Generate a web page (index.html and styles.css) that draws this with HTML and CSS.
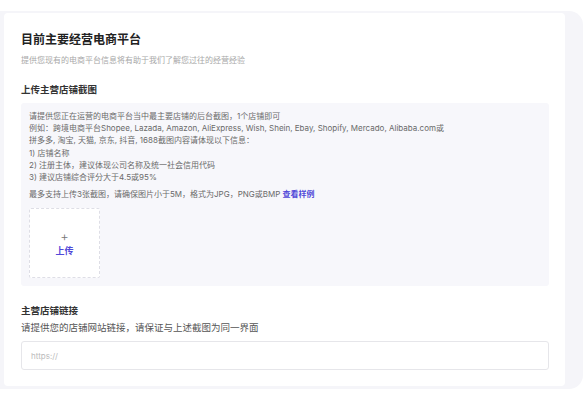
FILE: index.html
```html
<!DOCTYPE html>
<html lang="zh-CN">
<head>
  <meta charset="UTF-8" />
  <meta name="viewport" content="width=device-width, initial-scale=1.0" />
  <title>目前主要经营电商平台</title>
  <link rel="stylesheet" href="styles.css">
</head>
<body>
  <div class="panel">
    <div class="card">
      <h1 class="title">目前主要经营电商平台</h1>
      <p class="subtitle">提供您现有的电商平台信息将有助于我们了解您过往的经营经验</p>

      <h2 class="section-title">上传主营店铺截图</h2>
      <div class="upload-area">
        <div class="tips">
          <p>请提供您正在运营的电商平台当中最主要店铺的后台截图，1个店铺即可</p>
          <p>例如：跨境电商平台Shopee, Lazada, Amazon, AliExpress, Wish, Shein, Ebay, Shopify, Mercado, Alibaba.com或</p>
          <p>拼多多, 淘宝, 天猫, 京东, 抖音, 1688截图内容请体现以下信息：</p>
          <p>1) 店铺名称</p>
          <p>2) 注册主体，建议体现公司名称及统一社会信用代码</p>
          <p>3) 建议店铺综合评分大于4.5或95%</p>
        </div>
        <p class="limit">最多支持上传3张截图，请确保图片小于5M，格式为JPG，PNG或BMP <a class="sample">查看样例</a></p>
        <div class="uploader">
          <span class="plus">+</span>
          <span class="upload-text">上传</span>
        </div>
      </div>

      <h2 class="section-title link-title">主营店铺链接</h2>
      <p class="hint">请提供您的店铺网站链接，请保证与上述截图为同一界面</p>
      <input class="link-input" type="text" placeholder="https://" />
    </div>
  </div>
</body>
</html>
```

FILE: styles.css
```css
body {
  margin: 0;
  background: #ffffff;
  font-family: 'Inter', 'Noto Sans CJK SC', sans-serif;
}

p, h1, h2 {
  margin: 0;
}

.panel {
  margin-top: 11px;
  background: #f5f5f9;
  border-radius: 0 14px 14px 0;
  padding: 2px 18px 3px 4px;
}

.card {
  background: #ffffff;
  border-radius: 4px;
  padding: 19px 16px 16px 17px;
  display: flex;
  flex-direction: column;
}

.title {
  font-size: 12px;
  line-height: 16px;
  font-weight: 700;
  color: #222;
}

.subtitle {
  margin-top: 6px;
  font-size: 8px;
  line-height: 12px;
  color: #a8a8a8;
}

.section-title {
  margin-top: 17px;
  font-size: 9.5px;
  line-height: 14px;
  font-weight: 700;
  color: #333;
}

.upload-area {
  margin-top: 6px;
  background: #f7f7fb;
  border-radius: 3px;
  padding: 7px 8px 8px;
}

.tips p,
.limit {
  font-size: 8px;
  line-height: 12.2px;
  color: #6a6a6a;
}

.limit {
  margin-top: 5px;
}

.sample {
  color: #5048d8;
  font-weight: 600;
  cursor: pointer;
}

.uploader {
  margin-top: 8px;
  width: 69px;
  height: 68px;
  background: #ffffff;
  border: 1px dashed #dedee6;
  border-radius: 2px;
  display: flex;
  flex-direction: column;
  align-items: center;
  justify-content: center;
  gap: 2px;
}

.plus {
  font-size: 13px;
  line-height: 14px;
  font-weight: 300;
  color: #777;
}

.upload-text {
  font-size: 9px;
  line-height: 12px;
  font-weight: 700;
  color: #5048d8;
}

.link-title {
  margin-top: 18px;
}

.hint {
  margin-top: 3px;
  font-size: 9.5px;
  line-height: 14px;
  color: #555;
}

.link-input {
  margin-top: 6px;
  height: 29px;
  box-sizing: border-box;
  border: 1px solid #e6e6ea;
  border-radius: 3px;
  padding: 0 9px;
  font-family: inherit;
  font-size: 8px;
  color: #333;
  outline: none;
}

.link-input::placeholder {
  color: #bbb;
}
```
